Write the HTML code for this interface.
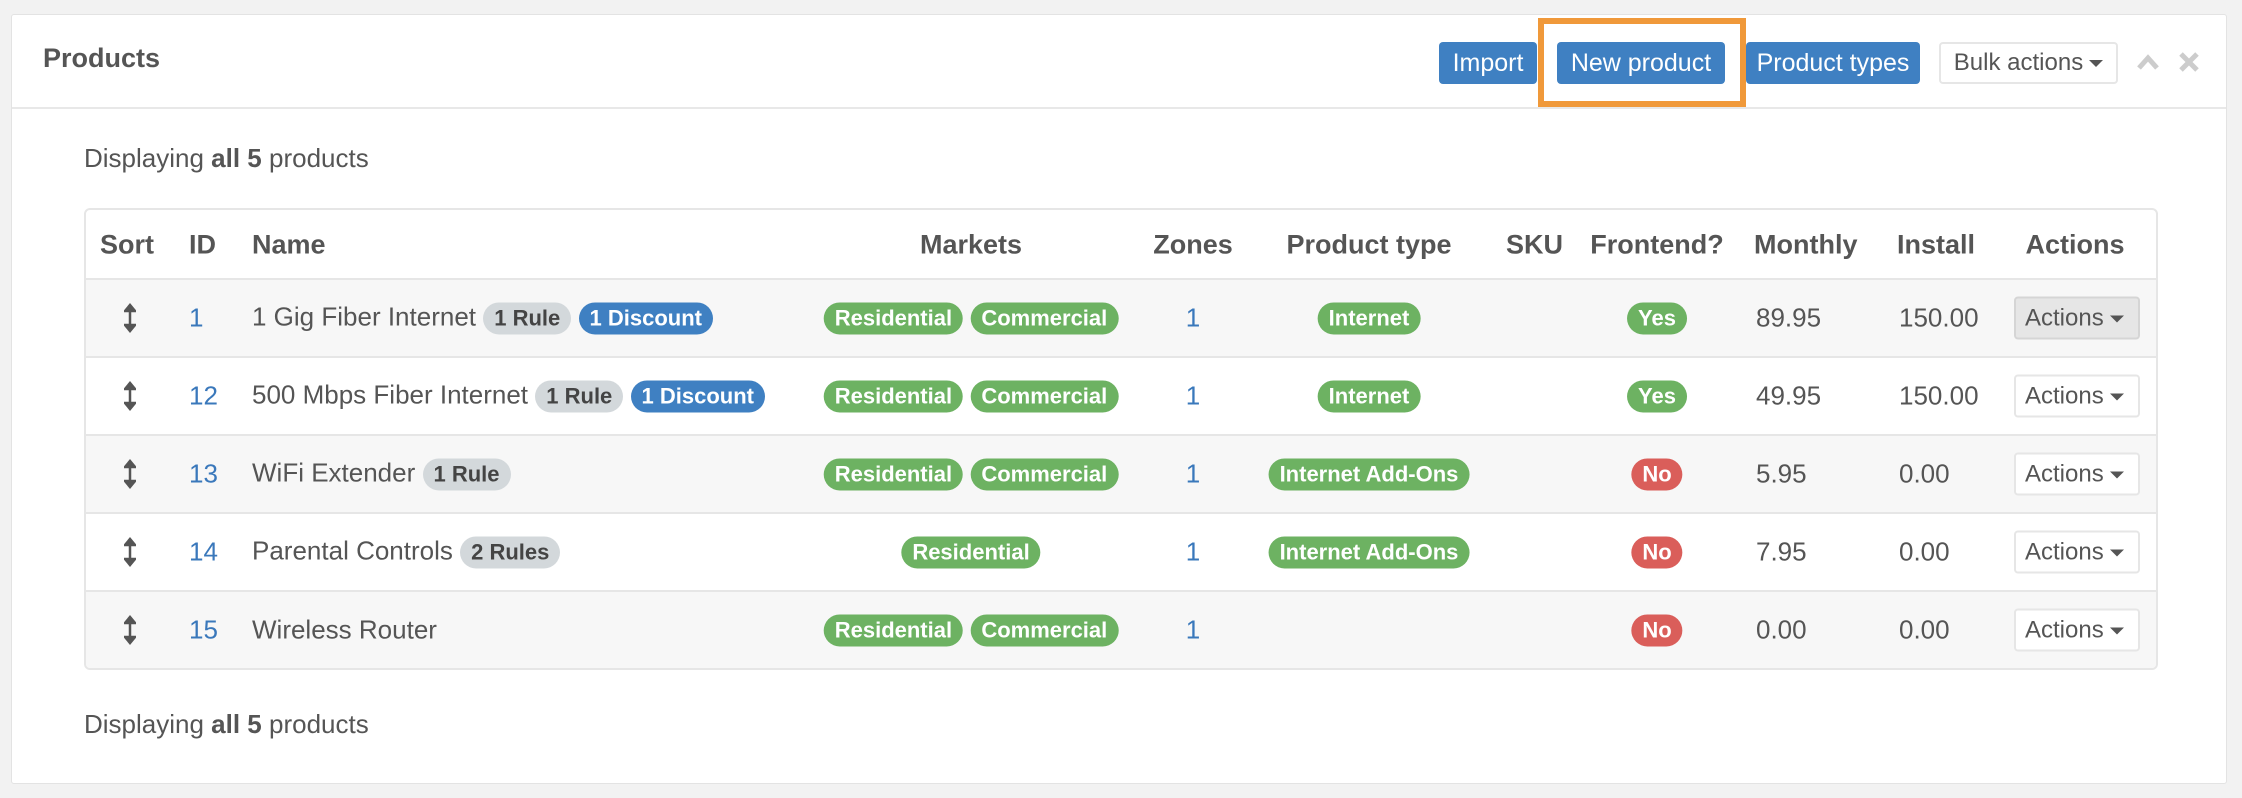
<!DOCTYPE html>
<html><head><meta charset="utf-8"><style>
*{box-sizing:border-box;margin:0;padding:0}
body{width:2242px;height:798px;background:#f2f2f2;font-family:"Liberation Sans",sans-serif;color:#555;position:relative;overflow:hidden}
.panel{position:absolute;left:11px;top:14px;width:2216px;height:770px;background:#fff;border:1px solid #e3e3e3;border-radius:3px}
.hdr{position:absolute;left:0;top:0;width:100%;height:94px;border-bottom:2px solid #e8e8e8}
.a{position:absolute;white-space:nowrap}
.btn{position:absolute;top:27px;height:42px;background:#3f80c2;color:#fff;font-size:25px;line-height:42px;text-align:center;border-radius:4px}
.tbl{position:absolute;left:72px;top:193px;width:2074px;height:462px;border:2px solid #e6e6e6;border-radius:6px;overflow:hidden}
.row{position:absolute;left:0;width:100%;border-top:2px solid #e6e6e6}
.c{position:absolute;top:50%;transform:translateY(-50%);white-space:nowrap;font-size:26px}
.cc{transform:translate(-50%,-50%)}
.th{font-weight:bold;font-size:27px}
.b{display:inline-block;height:32px;line-height:32px;padding:0 11px;border-radius:16px;font-size:22px;font-weight:bold;color:#fff;vertical-align:middle}
.g{background:#6db262}.bl{background:#3f80c2}.gr{background:#d3d8db;color:#444}.r{background:#da5e5a}
.lk{color:#3a78bb}
.act{position:absolute;top:50%;transform:translateY(-50%);width:126px;height:43px;border:2px solid #e6e6e6;border-radius:4px;background:#fff;font-size:24px;line-height:39px;padding-left:9px;color:#555}
.car{display:inline-block;width:0;height:0;border-left:7px solid transparent;border-right:7px solid transparent;border-top:7px solid #555;vertical-align:middle;margin-left:6px}
.srt{position:absolute;left:44px;top:50%;transform:translate(-50%,-50%);width:12px;height:30px}
</style></head><body>
<div class="panel">
 <div class="hdr">
  <div class="a" style="left:31px;top:28px;font-size:27px;font-weight:bold;color:#555">Products</div>
  <div class="btn" style="left:1427px;width:98px">Import</div>
  <div class="btn" style="left:1545px;width:168px">New product</div>
  <div class="btn" style="left:1734px;width:174px">Product types</div>
  <div class="btn" style="left:1927px;width:179px;background:#fff;color:#555;border:2px solid #e6e6e6;line-height:38px;font-size:24px">Bulk actions<span class="car"></span></div>
  <svg class="a" style="left:2124px;top:38px" width="24" height="18" viewBox="0 0 24 18"><path d="M3 15 L12 5 L21 15" fill="none" stroke="#ccc" stroke-width="5"/></svg>
  <svg class="a" style="left:2166px;top:36px" width="22" height="22" viewBox="0 0 22 22"><path d="M3 3 L19 19 M19 3 L3 19" stroke="#ccc" stroke-width="5"/></svg>
 </div>
 <div style="position:absolute;left:1526px;top:3px;width:208px;height:89px;border:6px solid #f0993a"></div>
 <div class="a" style="left:72px;top:128px;font-size:26px">Displaying <b>all 5</b> products</div>
 <div class="tbl">
  <div class="row" style="top:0;height:70px;border-top:none">
   <div class="c th" style="left:-4px;width:90px;text-align:center">Sort</div>
   <div class="c th" style="left:103px">ID</div>
   <div class="c th" style="left:166px">Name</div>
   <div class="c th cc" style="left:885px">Markets</div>
   <div class="c th cc" style="left:1107px">Zones</div>
   <div class="c th cc" style="left:1283px">Product type</div>
   <div class="c th" style="left:1420px">SKU</div>
   <div class="c th cc" style="left:1571px">Frontend?</div>
   <div class="c th" style="left:1668px">Monthly</div>
   <div class="c th" style="left:1811px">Install</div>
   <div class="c th cc" style="left:1989px">Actions</div>
  </div>
  <div class="row" style="top:68px;height:78px;background:#f7f7f7">
   <svg class="srt" viewBox="0 0 12 30"><path d="M6 3 V27 M1 8 L6 2 L11 8 Z M1 22 L6 28 L11 22 Z" stroke="#555" stroke-width="2.5" fill="#555"/></svg>
   <div class="c lk" style="left:103px">1</div>
   <div class="c" style="left:166px">1 Gig Fiber Internet <span class="b gr">1 Rule</span> <span class="b bl">1 Discount</span></div>
   <div class="c cc" style="left:885px"><span class="b g">Residential</span> <span class="b g">Commercial</span></div>
   <div class="c cc lk" style="left:1107px">1</div>
   <div class="c cc" style="left:1283px"><span class="b g">Internet</span></div>
   <div class="c cc" style="left:1571px"><span class="b g">Yes</span></div>
   <div class="c" style="left:1670px">89.95</div>
   <div class="c" style="left:1813px">150.00</div>
   <div class="act" style="left:1928px;background:#e6e6e6;border-color:#d5d5d5">Actions<span class="car"></span></div>
  </div>
  <div class="row" style="top:146px;height:78px">
   <svg class="srt" viewBox="0 0 12 30"><path d="M6 3 V27 M1 8 L6 2 L11 8 Z M1 22 L6 28 L11 22 Z" stroke="#555" stroke-width="2.5" fill="#555"/></svg>
   <div class="c lk" style="left:103px">12</div>
   <div class="c" style="left:166px">500 Mbps Fiber Internet <span class="b gr">1 Rule</span> <span class="b bl">1 Discount</span></div>
   <div class="c cc" style="left:885px"><span class="b g">Residential</span> <span class="b g">Commercial</span></div>
   <div class="c cc lk" style="left:1107px">1</div>
   <div class="c cc" style="left:1283px"><span class="b g">Internet</span></div>
   <div class="c cc" style="left:1571px"><span class="b g">Yes</span></div>
   <div class="c" style="left:1670px">49.95</div>
   <div class="c" style="left:1813px">150.00</div>
   <div class="act" style="left:1928px">Actions<span class="car"></span></div>
  </div>
  <div class="row" style="top:224px;height:78px;background:#f7f7f7">
   <svg class="srt" viewBox="0 0 12 30"><path d="M6 3 V27 M1 8 L6 2 L11 8 Z M1 22 L6 28 L11 22 Z" stroke="#555" stroke-width="2.5" fill="#555"/></svg>
   <div class="c lk" style="left:103px">13</div>
   <div class="c" style="left:166px">WiFi Extender <span class="b gr">1 Rule</span></div>
   <div class="c cc" style="left:885px"><span class="b g">Residential</span> <span class="b g">Commercial</span></div>
   <div class="c cc lk" style="left:1107px">1</div>
   <div class="c cc" style="left:1283px"><span class="b g">Internet Add-Ons</span></div>
   <div class="c cc" style="left:1571px"><span class="b r">No</span></div>
   <div class="c" style="left:1670px">5.95</div>
   <div class="c" style="left:1813px">0.00</div>
   <div class="act" style="left:1928px">Actions<span class="car"></span></div>
  </div>
  <div class="row" style="top:302px;height:78px">
   <svg class="srt" viewBox="0 0 12 30"><path d="M6 3 V27 M1 8 L6 2 L11 8 Z M1 22 L6 28 L11 22 Z" stroke="#555" stroke-width="2.5" fill="#555"/></svg>
   <div class="c lk" style="left:103px">14</div>
   <div class="c" style="left:166px">Parental Controls <span class="b gr">2 Rules</span></div>
   <div class="c cc" style="left:885px"><span class="b g">Residential</span></div>
   <div class="c cc lk" style="left:1107px">1</div>
   <div class="c cc" style="left:1283px"><span class="b g">Internet Add-Ons</span></div>
   <div class="c cc" style="left:1571px"><span class="b r">No</span></div>
   <div class="c" style="left:1670px">7.95</div>
   <div class="c" style="left:1813px">0.00</div>
   <div class="act" style="left:1928px">Actions<span class="car"></span></div>
  </div>
  <div class="row" style="top:380px;height:82px;background:#f7f7f7">
   <svg class="srt" viewBox="0 0 12 30" style="margin-top:-2px"><path d="M6 3 V27 M1 8 L6 2 L11 8 Z M1 22 L6 28 L11 22 Z" stroke="#555" stroke-width="2.5" fill="#555"/></svg>
   <div class="c lk" style="left:103px;margin-top:-2px">15</div>
   <div class="c" style="left:166px;margin-top:-2px">Wireless Router</div>
   <div class="c cc" style="left:885px;margin-top:-2px"><span class="b g">Residential</span> <span class="b g">Commercial</span></div>
   <div class="c cc lk" style="left:1107px;margin-top:-2px">1</div>
   <div class="c cc" style="left:1571px;margin-top:-2px"><span class="b r">No</span></div>
   <div class="c" style="left:1670px;margin-top:-2px">0.00</div>
   <div class="c" style="left:1813px;margin-top:-2px">0.00</div>
   <div class="act" style="left:1928px;margin-top:-2px">Actions<span class="car"></span></div>
  </div>
 </div>
 <div class="a" style="left:72px;top:694px;font-size:26px">Displaying <b>all 5</b> products</div>
</div>
</body></html>
